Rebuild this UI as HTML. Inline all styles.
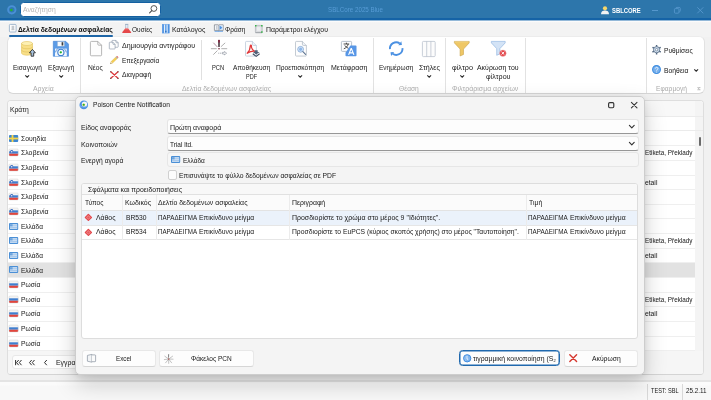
<!DOCTYPE html>
<html><head><meta charset="utf-8">
<style>
*{box-sizing:border-box;margin:0;padding:0}
html,body{width:711px;height:400px;overflow:hidden;background:#f1f1f1;font-family:"Liberation Sans",sans-serif;font-size:7.5px;color:#181818}
.a{position:absolute}
svg{position:absolute;overflow:visible}
.t{position:absolute;white-space:nowrap;line-height:10px;transform-origin:0 50%}
#title{left:0;top:0;width:711px;height:21px;background:linear-gradient(#2d76ab 0,#2d76ab 17.7px,#1563a6 18.5px,#1563a6 20px,#93b8d8 20px)}
#search{left:20px;top:2px;width:141px;height:15px;background:#fff;border:1px solid #1460a1;border-radius:3.5px}
#tabs{left:0;top:21px;width:711px;height:16px;background:linear-gradient(#fbfbfb 0,#fbfbfb 1px,#f6f6f6 1px,#f3f3f3 2px)}
#ribbon{left:7px;top:36px;width:698px;height:58px;background:#fff;border:1px solid #e2e2e2;border-top-color:#ececec;border-bottom-color:#d6d6d6;border-radius:6px}
.sep{position:absolute;width:1px;background:#e2e2e2;top:38px;height:55px}
.sep2{position:absolute;width:1px;background:#e0e0e0;top:40px;height:40px}
#grid{left:7px;top:100.4px;width:697.2px;height:274.2px;background:#fff;border:1px solid #dedede;border-bottom-color:#d4d4d4;border-radius:4px;overflow:hidden}
.gl{position:absolute;left:0;width:697px;height:1px;background:#e4e4e4}
#dlg{left:75px;top:96px;width:570px;height:279px;background:#f4f4f4;border:1px solid #cdcdcd;border-radius:5px;box-shadow:0 9px 22px rgba(0,0,0,.19),0 2px 7px rgba(0,0,0,.09)}
.inp{position:absolute;left:167px;width:472px;background:#fdfdfd;border:1px solid #e5e5e5;border-bottom:1px solid #979797;border-radius:3px}
.btn{position:absolute;top:350.2px;height:16.4px;background:#fdfdfd;border:1px solid #e8e8e8;border-bottom-color:#d6d6d6;border-radius:3px}
#status{left:0;top:380px;width:711px;height:20px;background:linear-gradient(#fbfbfb 0,#fbfbfb 3px,#f8f8f8 4px);border-top:2px solid #e4e4e4}
#root{position:absolute;left:0;top:0;width:711px;height:400px;will-change:transform}
</style></head><body><div id="root">
<!-- title bar -->
<div id="title" class="a"></div>
<div id="search" class="a"></div>
<svg style="left:6.7px;top:4.8px" width="9.6" height="9.6" viewBox="0 0 9.6 9.6"><circle cx="4.800" cy="4.800" r="3.700" fill="#3079b4" stroke="#4a90d6" stroke-width="1.900"/><circle cx="4.400" cy="4.900" r="1.250" fill="#22b52a"/></svg>
<svg style="left:149.4px;top:5.2px" width="8.4" height="8.6" viewBox="0 0 8.4 8.6"><circle cx="4.900" cy="3.500" r="2.900" fill="none" stroke="#4d4d4d" stroke-width=".95"/><path d="M2.800 5.700L.6 7.900" stroke="#4d4d4d" stroke-width="1.100" stroke-linecap="round"/></svg>
<svg style="left:601px;top:6px" width="8" height="8.2" viewBox="0 0 8 8.2"><circle cx="4" cy="2.3" r="2.1" fill="#f6d66a"/><path d="M0 8.2c0-2.6 1.6-3.6 4-3.6s4 1 4 3.6z" fill="#f2f2f2"/></svg>
<svg style="left:652px;top:9.6px" width="6" height="1" viewBox="0 0 6 1"><rect width="6" height=".9" fill="#5b9bd1"/></svg>
<svg style="left:674px;top:6.6px" width="6.6" height="6.6" viewBox="0 0 6.6 6.6"><rect x=".4" y="1.6" width="4.6" height="4.6" rx="1" fill="none" stroke="#5b9bd1" stroke-width=".8"/><path d="M1.8 1.2c.2-.6.6-.8 1.2-.8h2.2c.7 0 1.1.4 1.1 1.100v2.200c0 .6-.3 1-.8 1.200" fill="none" stroke="#5b9bd1" stroke-width=".8"/></svg>
<svg style="left:697px;top:6.8px" width="6.6" height="6.6" viewBox="0 0 6.6 6.6"><path d="M.3 .3L6.300 6.300M6.300 .3L.3 6.300" stroke="#5b9bd1" stroke-width=".8"/></svg>
<!-- tabs -->
<div id="tabs" class="a"></div>
<!-- ribbon -->
<div id="ribbon" class="a"></div>
<div class="a" style="left:9px;top:35px;width:104px;height:2px;background:#1f66a7;border-radius:1px"></div>
<div class="sep" style="left:80px"></div>
<div class="sep2" style="left:201.3px"></div>
<div class="sep" style="left:373px"></div>
<div class="sep" style="left:445px"></div>
<div class="sep" style="left:524.5px"></div>
<div class="sep" style="left:646px"></div>
<svg style="left:9.3px;top:24.2px" width="7.5" height="8.4" viewBox="0 0 7.5 8.4"><rect x=".4" y=".4" width="6.700" height="7.600" rx=".9" fill="#fdfdfd" stroke="#7f9dbd" stroke-width=".7"/><rect x="2.600" y="1.800" width="2.600" height="3.600" fill="#c4c9cf"/><path d="M2.400 5.700h3" stroke="#8a8f96" stroke-width=".5"/></svg>
<svg style="left:121.8px;top:23.8px" width="9.4" height="9.4" viewBox="0 0 9.4 9.4"><path d="M3.500 .5h2.400v3.800h-2.400z" fill="#e3ebf4" stroke="#8fa6c0" stroke-width=".5"/><path d="M3.100 .4h3.200" stroke="#8fa6c0" stroke-width=".7"/><path d="M3.400 4.200h2.600l3 3.800c.4.600.1 1.100-.6 1.100h-7.400c-.7 0-1-.5-.6-1.100z" fill="#e5484a"/><path d="M3.600 4.300h2.200l.8 1h-3.800z" fill="#f3a0a0"/></svg>
<svg style="left:162.2px;top:23.8px" width="7.6" height="9.4" viewBox="0 0 7.6 9.4"><rect x=".3" y=".3" width="7" height="8.800" fill="#e4effb" stroke="#6aa2e4" stroke-width=".5"/><rect x=".3" y=".3" width="1.600" height="8.800" fill="#4a90e2"/><rect x="5.700" y=".3" width="1.600" height="8.800" fill="#4a90e2"/><rect x="3" y=".3" width="1.600" height="8.800" fill="#6aa6ea"/><rect x="3.100" y="6.800" width="1.400" height="1.400" fill="#2f6fc0"/></svg>
<svg style="left:214.4px;top:24.4px" width="9.6" height="7.8" viewBox="0 0 9.6 7.8"><path d="M.4 .8h3.800l.6.500.6-.500h3.800v5.600h-3.800l-.6.500-.6-.500h-3.800z" fill="#f3f5f8" stroke="#5f6670" stroke-width=".6"/><rect x="2.300" y="1.600" width="1.100" height="4" fill="#b5bcc6"/><path d="M5.400 1.400h3.400v4.600h-3.400z" fill="#cfe2f8"/><path d="M5.600 1.600l2.800 2.100-2.800 2.100z" fill="#4a90e2"/><path d="M4.800 1.300v5.600" stroke="#5f6670" stroke-width=".5"/><path d="M.6 7.400h8.400" stroke="#4a90e2" stroke-width=".7"/></svg>
<svg style="left:255px;top:24.6px" width="7.6" height="8.2" viewBox="0 0 7.6 8.2"><rect x=".4" y=".4" width="6.800" height="7.200" rx=".5" fill="#d9dbde" stroke="#a3a7ad" stroke-width=".6"/><rect x="2" y="2.100" width="3.600" height="3.800" fill="#eceef0"/><path d="M.4 7.700h6.800" stroke="#8a8f96" stroke-width=".6"/><rect x="0" y="0" width="1.500" height="1.500" fill="#35b648"/><rect x="6.100" y="0" width="1.500" height="1.500" fill="#35b648"/><rect x="6.100" y="6.300" width="1.500" height="1.500" fill="#35b648"/></svg>
<svg style="left:25.400000000000002px;top:75.0px" width="4.4" height="2.6" viewBox="0 0 4.4 2.6"><path d="M.3 .3L2.200 2.200L4.100 .3" fill="none" stroke="#2c2c2c" stroke-width="1.100"/></svg>
<svg style="left:58.8px;top:75.0px" width="4.4" height="2.6" viewBox="0 0 4.4 2.6"><path d="M.3 .3L2.200 2.200L4.100 .3" fill="none" stroke="#2c2c2c" stroke-width="1.100"/></svg>
<svg style="left:298.3px;top:75.0px" width="4.4" height="2.6" viewBox="0 0 4.4 2.6"><path d="M.3 .3L2.200 2.200L4.100 .3" fill="none" stroke="#2c2c2c" stroke-width="1.100"/></svg>
<svg style="left:426.8px;top:75.0px" width="4.4" height="2.6" viewBox="0 0 4.4 2.6"><path d="M.3 .3L2.200 2.200L4.100 .3" fill="none" stroke="#2c2c2c" stroke-width="1.100"/></svg>
<svg style="left:459.7px;top:75.0px" width="4.4" height="2.6" viewBox="0 0 4.4 2.6"><path d="M.3 .3L2.200 2.200L4.100 .3" fill="none" stroke="#2c2c2c" stroke-width="1.100"/></svg>
<svg style="left:693.5999999999999px;top:69.39999999999999px" width="4.4" height="2.6" viewBox="0 0 4.4 2.6"><path d="M.3 .3L2.200 2.200L4.100 .3" fill="none" stroke="#2c2c2c" stroke-width="1.100"/></svg>
<svg style="left:21px;top:41px" width="15" height="16" viewBox="0 0 15 16">
<path d="M.5 2.500v9.500c0 1.200 2.300 2.200 5.500 2.200s5.500-1 5.500-2.200v-9.500z" fill="#f8df88" stroke="#e3c35e" stroke-width=".6"/>
<ellipse cx="6" cy="2.500" rx="5.500" ry="2" fill="#fdf0b4" stroke="#e3c35e" stroke-width=".6"/>
<path d="M.5 5.700c0 1.200 2.300 2.100 5.500 2.100s5.500-.9 5.500-2.100M.5 8.900c0 1.200 2.300 2.100 5.500 2.100s5.500-.9 5.500-2.100" fill="none" stroke="#e3c35e" stroke-width=".7"/>
<path d="M11.400 8.400l3 3.400h-1.700v3.400h-2.600v-3.400h-1.700z" fill="#a9c4e0" stroke="#2e2e2e" stroke-width=".9" stroke-linejoin="round"/></svg>
<svg style="left:53.2px;top:41px" width="15.8" height="15.6" viewBox="0 0 15.8 15.6">
<path d="M.3 .3h12.400l2.800 2.800v12.200h-15.200z" fill="#5b9be6" stroke="#3f7fd4" stroke-width=".6"/>
<rect x="4.400" y=".6" width="7" height="4.600" fill="#f6f9fd" stroke="#8aa6c8" stroke-width=".4"/>
<rect x="8.600" y="1.200" width="1.700" height="3.300" fill="#3a3a3a"/>
<rect x="2" y="7.600" width="11.800" height="7.600" fill="#f0f6fd"/>
<circle cx="7.900" cy="11.400" r="3.100" fill="#fafdff" stroke="#3f7fd0" stroke-width="1.100"/>
<path d="M2.400 11.400c1-3 2.600-4 2.600-4M13.400 11.400c-1-3-2.600-4-2.600-4" fill="none" stroke="#3f7fd0" stroke-width=".8"/>
<circle cx="7.800" cy="11.300" r="1.150" fill="#1fae2c"/></svg>
<svg style="left:89.5px;top:41px" width="12" height="15.2" viewBox="0 0 12 15.2"><path d="M.4 1.400a1 1 0 0 1 1-1h6.400l3.800 3.800v9.600a1 1 0 0 1-1 1h-9.200a1 1 0 0 1-1-1z" fill="#fdfdfd" stroke="#9a9a9a" stroke-width=".7"/><path d="M7.800 .4v2.800a1 1 0 0 0 1 1h2.800" fill="none" stroke="#9a9a9a" stroke-width=".7"/></svg>
<svg style="left:109.2px;top:40.3px" width="9.6" height="9.4" viewBox="0 0 9.6 9.4">
<path d="M3.500 .4h3.400l2.300 2.300v4a.6 .6 0 0 1-.6 .6h-5.100a.6 .6 0 0 1-.6-.6v-5.700a.6 .6 0 0 1 .6-.6z" fill="#fdfdfd" stroke="#8391a3" stroke-width=".6"/>
<path d="M6.900 .4v1.700a.6 .6 0 0 0 .6 .6h1.700" fill="none" stroke="#8391a3" stroke-width=".6"/>
<path d="M.9 2.200h3l2.200 2.200v4a.6 .6 0 0 1-.6 .6h-4.600a.6 .6 0 0 1-.6-.6v-5.600a.6 .6 0 0 1 .6-.6z" fill="#fdfdfd" stroke="#8391a3" stroke-width=".6"/>
<path d="M3.900 2.200v1.600a.6 .6 0 0 0 .6 .6h1.600" fill="none" stroke="#8391a3" stroke-width=".6"/></svg>
<svg style="left:109.8px;top:56px" width="8.6" height="8.2" viewBox="0 0 8.6 8.2"><path d="M.5 7.700l.6-2.100 5.300-5.200 1.500 1.500-5.300 5.200z" fill="#f5cf55" stroke="#d3a93a" stroke-width=".35"/><path d="M5.600 1.200l1.500 1.500.8-.8-1.500-1.500z" fill="#9fb4cc"/><path d="M6.500 .3l.5-.2c.4 0 1.400 1 1.400 1.400l-.4.500z" fill="#e4505a"/><path d="M.5 7.700l.6-2.100 1.500 1.500z" fill="#ecdcc0"/><path d="M.5 7.700l.3-.9.600.6z" fill="#333"/></svg>
<svg style="left:109.5px;top:70.5px" width="8.8" height="8" viewBox="0 0 8.8 8"><path d="M.8 .8L8 7.200M8 .8L.8 7.200" stroke="#dc3a3e" stroke-width="1.250" stroke-linecap="round"/><g fill="#2a1414"><circle cx=".8" cy=".8" r=".55"/><circle cx="8" cy=".8" r=".55"/><circle cx=".8" cy="7.200" r=".55"/><circle cx="8" cy="7.200" r=".55"/></g></svg>
<svg style="left:210.5px;top:40px" width="16.5" height="16" viewBox="0 0 16.5 16">
<g stroke="#9a9a9a" stroke-width=".8" stroke-linecap="round">
<path d="M.3 8.700H5.300M10.700 8.700H15.800M10.200 6.500L13.900 3.100M2.600 14.400L6.200 10.800"/></g>
<path d="M2.600 3L6.200 6.800" stroke="#a8768f" stroke-width=".8" stroke-linecap="round"/>
<path d="M8 .4V6.400" stroke="#2a161e" stroke-width="1.350" stroke-linecap="round"/>
<path d="M8 .4V2" stroke="#8a1838" stroke-width="1.350" stroke-linecap="round"/>
<circle cx="8" cy="8.700" r=".75" fill="#6a1028"/>
<path d="M7.200 13.200H11" stroke="#8a8f98" stroke-width=".7" stroke-dasharray="1.100 .7"/>
<path d="M11.400 12.400h2v-.9l2.300 1.700-2.300 1.700v-.9h-2z" fill="#fdfdfd" stroke="#6f7784" stroke-width=".5" stroke-linejoin="round"/></svg>
<svg style="left:245px;top:41px" width="15.5" height="16" viewBox="0 0 15.5 16">
<path d="M.5 1.300a.9 .9 0 0 1 .9-.9h6l4 4v9.800a.9 .9 0 0 1-.9 .9h-9.100a.9 .9 0 0 1-.9-.9z" fill="#fdfdfd" stroke="#b4c3d6" stroke-width=".7"/>
<path d="M7.400 .4v3a1 1 0 0 0 1 1h3" fill="#eef3f9" stroke="#b4c3d6" stroke-width=".7"/>
<path d="M2.200 12.300C4 10.600 5.200 7.200 5.300 4.700C5.400 3.700 6.500 3.800 6.400 4.900C6.200 7.100 7.800 9.700 9.900 10.300C7.200 10 4.400 11 2.200 12.300z" fill="none" stroke="#e0383a" stroke-width="1.250" stroke-linejoin="round"/>
<path d="M9.700 9.300h3v1.700h1.900l-3.400 2.500-3.400-2.500h1.900z" fill="#52627a"/>
<path d="M7.800 12.700l3.400 2.700 3.400-2.700" fill="none" stroke="#3e4c62" stroke-width="1.100"/></svg>
<svg style="left:294.6px;top:41px" width="12.6" height="15.4" viewBox="0 0 12.6 15.4">
<path d="M.5 1.300a.9 .9 0 0 1 .9-.9h6l4 4v9.800a.9 .9 0 0 1-.9 .9h-9.100a.9 .9 0 0 1-.9-.9z" fill="#fdfdfd" stroke="#aab4c0" stroke-width=".7"/>
<path d="M7.400 .4v3a1 1 0 0 0 1 1h3" fill="#f1f4f8" stroke="#aab4c0" stroke-width=".7"/>
<circle cx="5.600" cy="8.300" r="2.900" fill="#d8e7f8" stroke="#7fa6d6" stroke-width=".8"/><ellipse cx="5.600" cy="8.300" rx="1.500" ry="1.700" fill="#8db6e8"/>
<path d="M7.900 10.600l2.700 2.800" stroke="#5b7290" stroke-width="1.100" stroke-linecap="round"/></svg>
<svg style="left:340.6px;top:40.8px" width="16" height="15.6" viewBox="0 0 16 15.6">
<rect x=".4" y=".4" width="10.200" height="10" rx=".9" fill="#fbfcfe" stroke="#9aa7b8" stroke-width=".7"/>
<path d="M2.600 3h5.600M5.400 1.700v1.300M7.200 3c-.5 2.200-2.200 4-4.400 4.800M3.800 4.400c.8 1.400 2.200 2.500 3.800 3" fill="none" stroke="#2e2e2e" stroke-width=".85"/>
<path d="M9.400 4.600h5.300a.8 .8 0 0 1 .8 .8v9a.8 .8 0 0 1-.8 .8h-9.400a.8 .8 0 0 1-.8-.8v-2.600z" fill="#5796e6"/>
<path d="M7.600 13.900l2.500-6.300h.3l2.500 6.300M8.500 11.900h3.500" fill="none" stroke="#fff" stroke-width="1.150"/></svg>
<svg style="left:388px;top:41px" width="16.6" height="15.6" viewBox="0 0 16.6 15.6">
<path d="M1.920 8.150A6.300 6.300 0 0 1 11.810 2.440" fill="none" stroke="#4a90e2" stroke-width="1.900"/>
<path d="M13.900 3.900L13.300 .3L10.300 4.200z" fill="#4a90e2"/>
<path d="M14.480 7.050A6.300 6.300 0 0 1 4.590 12.760" fill="none" stroke="#4a90e2" stroke-width="1.900"/>
<path d="M2.500 11.300L3.100 14.900L6.100 11z" fill="#4a90e2"/></svg>
<svg style="left:422px;top:40.6px" width="13.8" height="16" viewBox="0 0 13.8 16"><rect x=".4" y=".4" width="12.800" height="15.200" rx="1" fill="#fcfcfc" stroke="#b3bcc8" stroke-width=".7"/><path d="M4.700 .4v15.200M8.900 .4v15.200" stroke="#b3bcc8" stroke-width=".7"/></svg>
<svg style="left:454.2px;top:40.6px" width="15.6" height="15.2" viewBox="0 0 15.6 15.2"><path d="M.4 .4h14.800v1.500l-5.700 6.200v5.400l-3.400 1.500v-6.900l-5.700-6.200z" fill="#efc765" stroke="#c9a24a" stroke-width=".6" stroke-linejoin="round"/><path d="M1 .9h13.600" stroke="#f7dc94" stroke-width=".6"/></svg>
<svg style="left:490.8px;top:40.6px" width="16" height="16.4" viewBox="0 0 16 16.4">
<path d="M.4 .4h13.800v1.500l-5.300 5.700v5.300l-3.200 1.400v-6.700l-5.300-5.700z" fill="#d3e3f6" stroke="#86aede" stroke-width=".6" stroke-linejoin="round"/>
<circle cx="11.900" cy="12.200" r="3.300" fill="#e2474b" stroke="#f6c9c9" stroke-width=".4"/>
<path d="M10.500 10.800l2.800 2.800M13.300 10.800l-2.800 2.800" stroke="#fff" stroke-width="1"/></svg>
<svg style="left:651.5px;top:45.4px" width="9.2" height="9.4" viewBox="0 0 9.2 9.4"><rect x="3.850" y="-.1" width="1.500" height="1.900" rx=".3" transform="rotate(0 4.600 4.700)" fill="#50667f"/><rect x="3.850" y="-.1" width="1.500" height="1.900" rx=".3" transform="rotate(60 4.600 4.700)" fill="#50667f"/><rect x="3.850" y="-.1" width="1.500" height="1.900" rx=".3" transform="rotate(120 4.600 4.700)" fill="#50667f"/><rect x="3.850" y="-.1" width="1.500" height="1.900" rx=".3" transform="rotate(180 4.600 4.700)" fill="#50667f"/><rect x="3.850" y="-.1" width="1.500" height="1.900" rx=".3" transform="rotate(240 4.600 4.700)" fill="#50667f"/><rect x="3.850" y="-.1" width="1.500" height="1.900" rx=".3" transform="rotate(300 4.600 4.700)" fill="#50667f"/>
<circle cx="4.600" cy="4.700" r="3.100" fill="#d3e2f2" stroke="#50667f" stroke-width=".8"/>
<circle cx="4.600" cy="4.700" r="1.250" fill="#f6f9fc" stroke="#50667f" stroke-width=".6"/></svg>
<svg style="left:651.6px;top:65px" width="9" height="9" viewBox="0 0 9 9"><circle cx="4.500" cy="4.500" r="3.900" fill="#78b0ec" stroke="#3f8de0" stroke-width="1.100"/><path d="M3.300 3.600c0-1.700 2.600-1.700 2.600-.1 0 1-1.300 1.100-1.300 2.200" fill="none" stroke="#f4f9ff" stroke-width=".9"/><circle cx="4.600" cy="6.900" r=".5" fill="#f4f9ff"/></svg>
<svg style="left:696.6px;top:86.8px" width="4" height="3.4" viewBox="0 0 4 3.4"><path d="M.2 .6h3.400M.2 2.800h3.400M2.800 .6L1 1.700l1.800 1.100" fill="none" stroke="#9a9a9a" stroke-width=".5"/></svg>
<!-- grid behind -->
<div id="grid" class="a">
<div class="a" style="left:0.0px;top:-0.4px;width:697.0px;height:15.3px;background:#f8f8f8"></div>
<div class="a" style="left:0.0px;top:161.5px;width:687.0px;height:14.2px;background:#e2e2e2"></div>
<div class="a" style="left:0.0px;top:249.2px;width:696.0px;height:24.0px;background:#f6f6f6"></div>
<div class="a" style="left:687.2px;top:-0.4px;width:10.0px;height:250.0px;background:#f4f4f4"></div>
<div class="a" style="left:0.0px;top:14.6px;width:696.0px;height:1.0px;background:#ebebeb"></div>
<div class="a" style="left:0.0px;top:28.6px;width:696.0px;height:1.0px;background:#ebebeb"></div>
<div class="a" style="left:0.0px;top:43.9px;width:687.0px;height:1.0px;background:#efefef"></div>
<div class="a" style="left:0.0px;top:58.5px;width:687.0px;height:1.0px;background:#efefef"></div>
<div class="a" style="left:0.0px;top:73.2px;width:687.0px;height:1.0px;background:#efefef"></div>
<div class="a" style="left:0.0px;top:87.8px;width:687.0px;height:1.0px;background:#efefef"></div>
<div class="a" style="left:0.0px;top:102.5px;width:687.0px;height:1.0px;background:#efefef"></div>
<div class="a" style="left:0.0px;top:117.1px;width:687.0px;height:1.0px;background:#efefef"></div>
<div class="a" style="left:0.0px;top:131.7px;width:687.0px;height:1.0px;background:#efefef"></div>
<div class="a" style="left:0.0px;top:146.4px;width:687.0px;height:1.0px;background:#efefef"></div>
<div class="a" style="left:0.0px;top:161.0px;width:687.0px;height:1.0px;background:#efefef"></div>
<div class="a" style="left:0.0px;top:175.7px;width:687.0px;height:1.0px;background:#efefef"></div>
<div class="a" style="left:0.0px;top:190.3px;width:687.0px;height:1.0px;background:#efefef"></div>
<div class="a" style="left:0.0px;top:204.9px;width:687.0px;height:1.0px;background:#efefef"></div>
<div class="a" style="left:0.0px;top:219.6px;width:687.0px;height:1.0px;background:#efefef"></div>
<div class="a" style="left:0.0px;top:234.2px;width:687.0px;height:1.0px;background:#efefef"></div>
<div class="a" style="left:0.0px;top:248.9px;width:687.0px;height:1.0px;background:#efefef"></div>
<div class="a" style="left:691.0px;top:35.3px;width:1.6px;height:9.5px;background:#6a6a6a;border-radius:1px"></div>
<div class="a" style="left:4.0px;top:253.9px;width:80.0px;height:14.2px;background:#fdfdfd;border:1px solid #e8e8e8;border-radius:3px"></div>
</div>
<svg style="left:8.9px;top:134.7px" width="9.2" height="7" viewBox="0 0 9.2 7"><rect width="9.2" height="7" rx="1" fill="#3d86cf"/><rect x="2.6" width="1.8" height="7" fill="#f5d44a"/><rect y="2.6" width="9.2" height="1.8" fill="#f5d44a"/></svg>
<svg style="left:8.9px;top:149.33999999999997px" width="9.2" height="7" viewBox="0 0 9.2 7"><rect width="9.2" height="7" rx="1" fill="#f4f4f4"/><rect y="2.3" width="9.2" height="2.4" fill="#3f7fd0"/><path d="M0 4.7h9.2v1.3a1 1 0 0 1-1 1h-7.2a1 1 0 0 1-1-1z" fill="#e2453c"/><circle cx="2.7" cy="2.6" r="1.5" fill="#3f6fc0"/><circle cx="2.7" cy="2.7" r=".8" fill="#e8e8f4"/><rect width="9.2" height="7" rx="1" fill="none" stroke="#c9c9c9" stroke-width=".4"/></svg>
<svg style="left:8.9px;top:163.98px" width="9.2" height="7" viewBox="0 0 9.2 7"><rect width="9.2" height="7" rx="1" fill="#f4f4f4"/><rect y="2.3" width="9.2" height="2.4" fill="#3f7fd0"/><path d="M0 4.7h9.2v1.3a1 1 0 0 1-1 1h-7.2a1 1 0 0 1-1-1z" fill="#e2453c"/><circle cx="2.7" cy="2.6" r="1.5" fill="#3f6fc0"/><circle cx="2.7" cy="2.7" r=".8" fill="#e8e8f4"/><rect width="9.2" height="7" rx="1" fill="none" stroke="#c9c9c9" stroke-width=".4"/></svg>
<svg style="left:8.9px;top:178.62px" width="9.2" height="7" viewBox="0 0 9.2 7"><rect width="9.2" height="7" rx="1" fill="#f4f4f4"/><rect y="2.3" width="9.2" height="2.4" fill="#3f7fd0"/><path d="M0 4.7h9.2v1.3a1 1 0 0 1-1 1h-7.2a1 1 0 0 1-1-1z" fill="#e2453c"/><circle cx="2.7" cy="2.6" r="1.5" fill="#3f6fc0"/><circle cx="2.7" cy="2.7" r=".8" fill="#e8e8f4"/><rect width="9.2" height="7" rx="1" fill="none" stroke="#c9c9c9" stroke-width=".4"/></svg>
<svg style="left:8.9px;top:193.26px" width="9.2" height="7" viewBox="0 0 9.2 7"><rect width="9.2" height="7" rx="1" fill="#f4f4f4"/><rect y="2.3" width="9.2" height="2.4" fill="#3f7fd0"/><path d="M0 4.7h9.2v1.3a1 1 0 0 1-1 1h-7.2a1 1 0 0 1-1-1z" fill="#e2453c"/><circle cx="2.7" cy="2.6" r="1.5" fill="#3f6fc0"/><circle cx="2.7" cy="2.7" r=".8" fill="#e8e8f4"/><rect width="9.2" height="7" rx="1" fill="none" stroke="#c9c9c9" stroke-width=".4"/></svg>
<svg style="left:8.9px;top:207.89999999999998px" width="9.2" height="7" viewBox="0 0 9.2 7"><rect width="9.2" height="7" rx="1" fill="#f4f4f4"/><rect y="2.3" width="9.2" height="2.4" fill="#3f7fd0"/><path d="M0 4.7h9.2v1.3a1 1 0 0 1-1 1h-7.2a1 1 0 0 1-1-1z" fill="#e2453c"/><circle cx="2.7" cy="2.6" r="1.5" fill="#3f6fc0"/><circle cx="2.7" cy="2.7" r=".8" fill="#e8e8f4"/><rect width="9.2" height="7" rx="1" fill="none" stroke="#c9c9c9" stroke-width=".4"/></svg>
<svg style="left:8.9px;top:222.54px" width="9.2" height="7" viewBox="0 0 9.2 7"><rect width="9.2" height="7" rx="1" fill="#4a8fd6"/><rect x="1" y="1.2" width="7.2" height="4.6" fill="#dfeaf7"/><rect x="1" y="2.4" width="7.2" height=".8" fill="#8fb9e6"/><rect x="1" y="3.9" width="7.2" height=".8" fill="#8fb9e6"/><rect x="1" y="1.2" width="2.6" height="2.2" fill="#6aa3de"/></svg>
<svg style="left:8.9px;top:237.18px" width="9.2" height="7" viewBox="0 0 9.2 7"><rect width="9.2" height="7" rx="1" fill="#4a8fd6"/><rect x="1" y="1.2" width="7.2" height="4.6" fill="#dfeaf7"/><rect x="1" y="2.4" width="7.2" height=".8" fill="#8fb9e6"/><rect x="1" y="3.9" width="7.2" height=".8" fill="#8fb9e6"/><rect x="1" y="1.2" width="2.6" height="2.2" fill="#6aa3de"/></svg>
<svg style="left:8.9px;top:251.82px" width="9.2" height="7" viewBox="0 0 9.2 7"><rect width="9.2" height="7" rx="1" fill="#4a8fd6"/><rect x="1" y="1.2" width="7.2" height="4.6" fill="#dfeaf7"/><rect x="1" y="2.4" width="7.2" height=".8" fill="#8fb9e6"/><rect x="1" y="3.9" width="7.2" height=".8" fill="#8fb9e6"/><rect x="1" y="1.2" width="2.6" height="2.2" fill="#6aa3de"/></svg>
<svg style="left:8.9px;top:266.46px" width="9.2" height="7" viewBox="0 0 9.2 7"><rect width="9.2" height="7" rx="1" fill="#4a8fd6"/><rect x="1" y="1.2" width="7.2" height="4.6" fill="#dfeaf7"/><rect x="1" y="2.4" width="7.2" height=".8" fill="#8fb9e6"/><rect x="1" y="3.9" width="7.2" height=".8" fill="#8fb9e6"/><rect x="1" y="1.2" width="2.6" height="2.2" fill="#6aa3de"/></svg>
<svg style="left:8.9px;top:281.1px" width="9.2" height="7" viewBox="0 0 9.2 7"><rect width="9.2" height="7" rx="1" fill="#f4f4f4"/><rect y="2.3" width="9.2" height="2.4" fill="#3f7fd0"/><path d="M0 4.7h9.2v1.3a1 1 0 0 1-1 1h-7.2a1 1 0 0 1-1-1z" fill="#e2453c"/><rect width="9.2" height="7" rx="1" fill="none" stroke="#c9c9c9" stroke-width=".4"/></svg>
<svg style="left:8.9px;top:295.74px" width="9.2" height="7" viewBox="0 0 9.2 7"><rect width="9.2" height="7" rx="1" fill="#f4f4f4"/><rect y="2.3" width="9.2" height="2.4" fill="#3f7fd0"/><path d="M0 4.7h9.2v1.3a1 1 0 0 1-1 1h-7.2a1 1 0 0 1-1-1z" fill="#e2453c"/><rect width="9.2" height="7" rx="1" fill="none" stroke="#c9c9c9" stroke-width=".4"/></svg>
<svg style="left:8.9px;top:310.38px" width="9.2" height="7" viewBox="0 0 9.2 7"><rect width="9.2" height="7" rx="1" fill="#f4f4f4"/><rect y="2.3" width="9.2" height="2.4" fill="#3f7fd0"/><path d="M0 4.7h9.2v1.3a1 1 0 0 1-1 1h-7.2a1 1 0 0 1-1-1z" fill="#e2453c"/><rect width="9.2" height="7" rx="1" fill="none" stroke="#c9c9c9" stroke-width=".4"/></svg>
<svg style="left:8.9px;top:325.02px" width="9.2" height="7" viewBox="0 0 9.2 7"><rect width="9.2" height="7" rx="1" fill="#f4f4f4"/><rect y="2.3" width="9.2" height="2.4" fill="#3f7fd0"/><path d="M0 4.7h9.2v1.3a1 1 0 0 1-1 1h-7.2a1 1 0 0 1-1-1z" fill="#e2453c"/><rect width="9.2" height="7" rx="1" fill="none" stroke="#c9c9c9" stroke-width=".4"/></svg>
<svg style="left:8.9px;top:339.65999999999997px" width="9.2" height="7" viewBox="0 0 9.2 7"><rect width="9.2" height="7" rx="1" fill="#f4f4f4"/><rect y="2.3" width="9.2" height="2.4" fill="#3f7fd0"/><path d="M0 4.7h9.2v1.3a1 1 0 0 1-1 1h-7.2a1 1 0 0 1-1-1z" fill="#e2453c"/><rect width="9.2" height="7" rx="1" fill="none" stroke="#c9c9c9" stroke-width=".4"/></svg>
<svg style="left:14.9px;top:359.6px" width="7" height="5.2" viewBox="0 0 7 5.2"><path d="M.6 0v5.200M3.700 0L1.500 2.600L3.700 5.200M6.500 0L4.300 2.600L6.500 5.200" fill="none" stroke="#2e2e2e" stroke-width="1"/></svg>
<svg style="left:29.2px;top:359.6px" width="6" height="5.2" viewBox="0 0 6 5.2"><path d="M2.700 0L.5 2.600L2.700 5.200M5.500 0L3.300 2.600L5.500 5.200" fill="none" stroke="#2e2e2e" stroke-width="1"/></svg>
<svg style="left:44px;top:359.6px" width="3" height="5.2" viewBox="0 0 3 5.2"><path d="M2.800 0L.5 2.600L2.800 5.200" fill="none" stroke="#2e2e2e" stroke-width="1"/></svg>
<div class="t" style="left:10.2px;top:105px;transform:scaleX(0.901)">Κράτη</div>
<div class="t" style="left:21.0px;top:134px;transform:scaleX(0.913)">Σουηδία</div>
<div class="t" style="left:21.0px;top:148px;transform:scaleX(0.921)">Σλοβενία</div>
<div class="t" style="left:21.0px;top:163px;transform:scaleX(0.921)">Σλοβενία</div>
<div class="t" style="left:21.0px;top:178px;transform:scaleX(0.921)">Σλοβενία</div>
<div class="t" style="left:21.0px;top:192px;transform:scaleX(0.921)">Σλοβενία</div>
<div class="t" style="left:21.0px;top:207px;transform:scaleX(0.921)">Σλοβενία</div>
<div class="t" style="left:21.0px;top:222px;transform:scaleX(0.871)">Ελλάδα</div>
<div class="t" style="left:21.0px;top:236px;transform:scaleX(0.871)">Ελλάδα</div>
<div class="t" style="left:21.0px;top:251px;transform:scaleX(0.871)">Ελλάδα</div>
<div class="t" style="left:21.0px;top:266px;transform:scaleX(0.871)">Ελλάδα</div>
<div class="t" style="left:21.0px;top:280px;transform:scaleX(0.898)">Ρωσία</div>
<div class="t" style="left:21.0px;top:295px;transform:scaleX(0.898)">Ρωσία</div>
<div class="t" style="left:21.0px;top:309px;transform:scaleX(0.898)">Ρωσία</div>
<div class="t" style="left:21.0px;top:324px;transform:scaleX(0.898)">Ρωσία</div>
<div class="t" style="left:21.0px;top:339px;transform:scaleX(0.898)">Ρωσία</div>
<div class="t" style="left:644.5px;top:148px;transform:scaleX(0.844)">Etiketa, Překlady</div>
<div class="t" style="left:644.5px;top:236px;transform:scaleX(0.844)">Etiketa, Překlady</div>
<div class="t" style="left:644.5px;top:295px;transform:scaleX(0.844)">Etiketa, Překlady</div>
<div class="t" style="left:639.6px;top:178px;transform:scaleX(0.907)">Detail</div>
<div class="t" style="left:639.6px;top:251px;transform:scaleX(0.907)">Detail</div>
<div class="t" style="left:639.6px;top:309px;transform:scaleX(0.907)">Detail</div>
<div class="t" style="left:56.0px;top:358px;transform:scaleX(0.924)">Εγγρα</div>
<!-- status -->
<div id="status" class="a"></div>
<div class="a" style="left:647.2px;top:384px;width:1px;height:16px;background:#d9d9d9"></div>
<div class="a" style="left:682.4px;top:384px;width:1px;height:16px;background:#d9d9d9"></div>
<!-- dialog -->
<div id="dlg" class="a"></div>
<div class="inp" style="top:119px;height:15px"></div>
<div class="inp" style="top:136px;height:15px"></div>
<div class="a" style="left:167px;top:152px;width:472px;height:15px;background:#f6f6f6;border:1px solid #e6e6e6;border-radius:3px"></div>
<div class="a" style="left:168px;top:170.4px;width:8.6px;height:9.2px;background:#fcfcfc;border:1px solid #d0d0d0;border-radius:2px"></div>
<div class="a" style="left:81px;top:183px;width:557px;height:156px;background:#fff;border:1px solid #dddddd;border-radius:3px;overflow:hidden">
  <div class="a" style="left:0;top:0;width:556px;height:10.2px;background:#f8f8f8"></div>
  <div class="a" style="left:0;top:10.2px;width:556px;height:1px;background:#e1e1e1"></div>
  <div class="a" style="left:0;top:11.2px;width:556px;height:14.6px;background:#fbfbfb"></div>
  <div class="a" style="left:0;top:25.8px;width:556px;height:1px;background:#e3e3e3"></div>
  <div class="a" style="left:0;top:26.8px;width:556px;height:13.8px;background:#ebf2fb"></div>
  <div class="a" style="left:0;top:40.6px;width:556px;height:1px;background:#e6e6e6"></div>
  <div class="a" style="left:0;top:55.2px;width:556px;height:1px;background:#e6e6e6"></div>
  <div class="a" style="left:40.2px;top:11px;width:1px;height:45px;background:#ececec"></div>
  <div class="a" style="left:73.5px;top:11px;width:1px;height:45px;background:#ececec"></div>
  <div class="a" style="left:206.8px;top:11px;width:1px;height:45px;background:#ececec"></div>
  <div class="a" style="left:443.7px;top:11px;width:1px;height:45px;background:#ececec"></div>
</div>
<!-- buttons -->
<div class="btn" style="left:82px;width:74px"></div>
<div class="btn" style="left:159px;width:95px"></div>
<div class="btn" style="left:459px;top:350px;width:101.4px;height:16.4px;border:1px solid #2069ae;box-shadow:inset 0 0 0 .5px #2069ae;border-radius:3.5px"></div>
<div class="btn" style="left:564px;width:74px"></div>
<svg style="left:79px;top:99.8px" width="9.8" height="9.6" viewBox="0 0 9.8 9.6"><circle cx="4.800" cy="4.900" r="4.300" fill="#4a90e2"/><circle cx="5.500" cy="4.100" r="2.700" fill="#f2f7fd"/><path d="M.7 5.600c2.200 1.700 5.600 2 8 .1" fill="none" stroke="#8fc0f4" stroke-width=".7"/><circle cx="4.700" cy="4.700" r="1.500" fill="#f1dd7c"/><circle cx="4.700" cy="4.700" r="1.050" fill="#1fae2c"/></svg>
<svg style="left:608.3px;top:101.5px" width="6.4" height="6.4" viewBox="0 0 6.4 6.4"><rect x=".6" y=".6" width="5.200" height="5.200" rx="1.200" fill="none" stroke="#333" stroke-width="1.150"/></svg>
<svg style="left:631.2px;top:101.5px" width="6.4" height="6.4" viewBox="0 0 6.4 6.4"><path d="M.4 .4L6 6M6 .4L.4 6" stroke="#333" stroke-width="1.050" stroke-linecap="round"/></svg>
<svg style="left:629.2px;top:125.30000000000001px" width="5.6" height="3.4" viewBox="0 0 5.6 3.4"><path d="M.4 .4L2.800 2.800L5.200 .4" fill="none" stroke="#333" stroke-width="1.150" stroke-linecap="round" stroke-linejoin="round"/></svg>
<svg style="left:629.2px;top:141.8px" width="5.6" height="3.4" viewBox="0 0 5.6 3.4"><path d="M.4 .4L2.800 2.800L5.200 .4" fill="none" stroke="#333" stroke-width="1.150" stroke-linecap="round" stroke-linejoin="round"/></svg>
<svg style="left:170.5px;top:155.6px" width="9.2" height="7" viewBox="0 0 9.2 7"><rect width="9.2" height="7" rx="1" fill="#4a8fd6"/><rect x="1" y="1.2" width="7.2" height="4.6" fill="#dfeaf7"/><rect x="1" y="2.4" width="7.2" height=".8" fill="#8fb9e6"/><rect x="1" y="3.9" width="7.2" height=".8" fill="#8fb9e6"/><rect x="1" y="1.2" width="2.6" height="2.2" fill="#6aa3de"/></svg>
<svg style="left:84px;top:213.0px" width="8.8" height="8.8" viewBox="0 0 8.8 8.8"><rect x="1.600" y="1.600" width="5.600" height="5.600" rx=".7" transform="rotate(45 4.400 4.400)" fill="#e3474b"/><rect x="2.700" y="2.700" width="3.400" height="3.400" transform="rotate(45 4.400 4.400)" fill="#ee8587"/><rect x="3.500" y="3.500" width="1.800" height="1.800" transform="rotate(45 4.400 4.400)" fill="#e65a5d"/></svg>
<svg style="left:84px;top:227.6px" width="8.8" height="8.8" viewBox="0 0 8.8 8.8"><rect x="1.600" y="1.600" width="5.600" height="5.600" rx=".7" transform="rotate(45 4.400 4.400)" fill="#e3474b"/><rect x="2.700" y="2.700" width="3.400" height="3.400" transform="rotate(45 4.400 4.400)" fill="#ee8587"/><rect x="3.500" y="3.500" width="1.800" height="1.800" transform="rotate(45 4.400 4.400)" fill="#e65a5d"/></svg>
<svg style="left:87px;top:354px" width="9" height="8.6" viewBox="0 0 9 8.6"><path d="M.4 1.400L4.800 .4v7.800L.4 7.200z" fill="#f2f4f6" stroke="#7f8a97" stroke-width=".65" stroke-linejoin="round"/><path d="M4.800 .9h3.200a.6 .6 0 0 1 .6 .6v5.600a.6 .6 0 0 1-.6 .6h-3.200" fill="#fbfbfb" stroke="#7f8a97" stroke-width=".65"/></svg>
<svg style="left:164.2px;top:353.6px" width="9.4" height="9.6" viewBox="0 0 9.4 9.6"><g stroke="#9a9a9a" stroke-width=".6" stroke-linecap="round"><path d="M4.700 5L.8 2.200M4.700 5L.3 5.600M4.700 5L1.600 8.800M4.700 5L8.600 2.200M4.700 5L9.100 5.200M4.700 5L7.600 8.800M4.700 5v4.400"/></g><path d="M4.400 .2h.7l-.1 3.600h-.5z" fill="#333"/><circle cx="4.700" cy="5" r=".6" fill="#d6382f"/></svg>
<svg style="left:463.4px;top:353.7px" width="8.4" height="8.6" viewBox="0 0 8.4 8.6"><circle cx="4.200" cy="4.300" r="3.650" fill="#7fb4ee" stroke="#3f8de0" stroke-width="1"/><path d="M4 1.700v3.500h1.300" fill="none" stroke="#f4f9ff" stroke-width=".9"/><path d="M2.700 1.800c-.9 1.500-.9 3.600 0 5" fill="none" stroke="#a9cdf4" stroke-width=".6"/></svg>
<svg style="left:568.8px;top:354.4px" width="8.4" height="8.4" viewBox="0 0 8.4 8.4"><path d="M.8 .8L7.600 7.600M7.600 .8L.8 7.600" stroke="#d6382f" stroke-width="1.400" stroke-linecap="round"/></svg>
<div class="t" style="left:23.3px;top:5px;transform:scaleX(0.902);color:#b4b4b4">Αναζήτηση</div>
<div class="t" style="left:327.8px;top:5px;transform:scaleX(0.830);color:#579cd6">SBLCore 2025 Blue</div>
<div class="t" style="left:612.0px;top:6px;transform:scaleX(0.783);color:#ffffff;font-weight:bold">SBLCORE</div>
<div class="t" style="left:18.1px;top:25px;transform:scaleX(0.845);color:#0c0c0c;font-weight:bold;font-size:8px">Δελτία δεδομένων ασφαλείας</div>
<div class="t" style="left:132.0px;top:25px;transform:scaleX(0.871)">Ουσίες</div>
<div class="t" style="left:171.6px;top:25px;transform:scaleX(0.930)">Κατάλογος</div>
<div class="t" style="left:224.7px;top:25px;transform:scaleX(0.868)">Φράση</div>
<div class="t" style="left:266.0px;top:25px;transform:scaleX(0.920)">Παράμετροι ελέγχου</div>
<div class="t" style="left:13.2px;top:63px;transform:scaleX(0.874)">Εισαγωγή</div>
<div class="t" style="left:47.8px;top:63px;transform:scaleX(0.876)">Εξαγωγή</div>
<div class="t" style="left:88.2px;top:63px;transform:scaleX(0.888)">Νέος</div>
<div class="t" style="left:121.7px;top:41px;transform:scaleX(0.940)">Δημιουργία αντιγράφου</div>
<div class="t" style="left:121.7px;top:56px;transform:scaleX(0.863)">Επεξεργασία</div>
<div class="t" style="left:121.7px;top:70px;transform:scaleX(0.904)">Διαγραφή</div>
<div class="t" style="left:212.4px;top:63px;transform:scaleX(0.770)">PCN</div>
<div class="t" style="left:233.0px;top:63px;transform:scaleX(0.876)">Αποθήκευση</div>
<div class="t" style="left:246.0px;top:72px;transform:scaleX(0.733)">PDF</div>
<div class="t" style="left:276.4px;top:63px;transform:scaleX(0.885)">Προεπισκόπηση</div>
<div class="t" style="left:330.5px;top:63px;transform:scaleX(0.934)">Μετάφραση</div>
<div class="t" style="left:379.4px;top:63px;transform:scaleX(0.868)">Ενημέρωση</div>
<div class="t" style="left:418.8px;top:63px;transform:scaleX(0.945)">Στήλες</div>
<div class="t" style="left:451.5px;top:63px;transform:scaleX(0.968)">φίλτρο</div>
<div class="t" style="left:477.4px;top:63px;transform:scaleX(0.924)">Ακύρωση του</div>
<div class="t" style="left:485.8px;top:72px;transform:scaleX(0.950)">φίλτρου</div>
<div class="t" style="left:664.0px;top:46px;transform:scaleX(0.885)">Ρυθμίσεις</div>
<div class="t" style="left:664.0px;top:66px;transform:scaleX(0.908)">Βοήθεια</div>
<div class="t" style="left:33.3px;top:84px;transform:scaleX(0.917);color:#ababab">Αρχεία</div>
<div class="t" style="left:181.8px;top:84px;transform:scaleX(0.919);color:#ababab">Δελτία δεδομένων ασφαλείας</div>
<div class="t" style="left:399.0px;top:84px;transform:scaleX(0.887);color:#ababab">Θέαση</div>
<div class="t" style="left:451.8px;top:84px;transform:scaleX(0.929);color:#ababab">Φιλτράρισμα αρχείων</div>
<div class="t" style="left:656.0px;top:84px;transform:scaleX(0.888);color:#ababab">Εφαρμογή</div>
<div class="t" style="left:93.0px;top:100px;transform:scaleX(0.888);color:#151515">Poison Centre Notification</div>
<div class="t" style="left:81.2px;top:123px;transform:scaleX(0.919)">Είδος αναφοράς</div>
<div class="t" style="left:81.2px;top:140px;transform:scaleX(0.934)">Κοινοποιών</div>
<div class="t" style="left:81.2px;top:156px;transform:scaleX(0.896)">Ενεργή αγορά</div>
<div class="t" style="left:169.8px;top:123px;transform:scaleX(0.936)">Πρώτη αναφορά</div>
<div class="t" style="left:169.8px;top:140px;transform:scaleX(0.867)">Trial ltd.</div>
<div class="t" style="left:183.3px;top:156px;transform:scaleX(0.867)">Ελλάδα</div>
<div class="t" style="left:179.2px;top:171px;transform:scaleX(0.897)">Επισυνάψτε το φύλλο δεδομένων ασφαλείας σε PDF</div>
<div class="t" style="left:88.0px;top:185px;transform:scaleX(0.917)">Σφάλματα και προειδοποιήσεις</div>
<div class="t" style="left:85.0px;top:198px;transform:scaleX(0.886)">Τύπος</div>
<div class="t" style="left:125.0px;top:198px;transform:scaleX(0.927)">Κωδικός</div>
<div class="t" style="left:157.5px;top:198px;transform:scaleX(0.924)">Δελτίο δεδομένων ασφαλείας</div>
<div class="t" style="left:292.0px;top:198px;transform:scaleX(0.920)">Περιγραφή</div>
<div class="t" style="left:529.0px;top:198px;transform:scaleX(0.912)">Τιμή</div>
<div class="t" style="left:96.0px;top:213px;transform:scaleX(0.915)">Λάθος</div>
<div class="t" style="left:125.5px;top:213px;transform:scaleX(0.894)">BR530</div>
<div class="t" style="left:158.0px;top:213px;transform:scaleX(0.826)">ΠΑΡΑΔΕΙΓΜΑ</div>
<div class="t" style="left:199.4px;top:213px;transform:scaleX(0.906)">Επικίνδυνο μείγμα</div>
<div class="t" style="left:291.6px;top:213px;transform:scaleX(0.929)">Προσδιορίστε το χρώμα στο μέρος 9 &quot;Ιδιότητες&quot;.</div>
<div class="t" style="left:528.2px;top:213px;transform:scaleX(0.836)">ΠΑΡΑΔΕΙΓΜΑ</div>
<div class="t" style="left:570.4px;top:213px;transform:scaleX(0.911)">Επικίνδυνο μείγμα</div>
<div class="t" style="left:96.0px;top:227px;transform:scaleX(0.915)">Λάθος</div>
<div class="t" style="left:125.5px;top:227px;transform:scaleX(0.894)">BR534</div>
<div class="t" style="left:158.0px;top:227px;transform:scaleX(0.826)">ΠΑΡΑΔΕΙΓΜΑ</div>
<div class="t" style="left:199.4px;top:227px;transform:scaleX(0.906)">Επικίνδυνο μείγμα</div>
<div class="t" style="left:291.6px;top:227px;transform:scaleX(0.900)">Προσδιορίστε το EuPCS (κύριος σκοπός χρήσης) στο μέρος &quot;Ταυτοποίηση&quot;.</div>
<div class="t" style="left:528.2px;top:227px;transform:scaleX(0.836)">ΠΑΡΑΔΕΙΓΜΑ</div>
<div class="t" style="left:570.4px;top:227px;transform:scaleX(0.911)">Επικίνδυνο μείγμα</div>
<div class="t" style="left:115.9px;top:354px;transform:scaleX(0.840)">Excel</div>
<div class="t" style="left:191.0px;top:354px;transform:scaleX(0.870)">Φάκελος PCN</div>
<div class="t" style="left:473.0px;top:354px;transform:scaleX(0.912)">τιγραμμική κοινοποίηση (S₂</div>
<div class="t" style="left:591.5px;top:354px;transform:scaleX(0.903)">Ακύρωση</div>
<div class="t" style="left:651.0px;top:386px;transform:scaleX(0.752)">TEST: SBL</div>
<div class="t" style="left:686.0px;top:386px;transform:scaleX(0.842)">25.2.11</div>
</div></body></html>
